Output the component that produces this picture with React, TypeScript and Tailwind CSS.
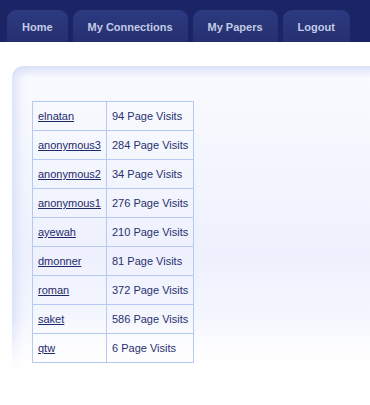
const tabs = ['Home', 'My Connections', 'My Papers', 'Logout'];

const visits: [string, number][] = [
  ['elnatan', 94],
  ['anonymous3', 284],
  ['anonymous2', 34],
  ['anonymous1', 276],
  ['ayewah', 210],
  ['dmonner', 81],
  ['roman', 372],
  ['saket', 586],
  ['qtw', 6],
];

export default function App() {
  return (
    <div className="min-h-screen bg-white font-['Liberation_Sans',Arial,sans-serif] overflow-hidden">
      {/* nav */}
      <div className="h-[42px] bg-[#1b2566] flex items-end gap-[5px] pl-[7px]">
        {tabs.map(t => (
          <a
            key={t}
            href="#"
            className="h-[32px] px-[15px] flex items-center rounded-t-[9px] bg-gradient-to-b from-[#2c3a80] to-[#25306f] text-[11px] font-bold text-[#c3cbe6] pt-[3px]"
          >
            {t}
          </a>
        ))}
      </div>

      {/* content panel, its shading fades out toward the bottom */}
      <div className="relative isolate mt-[24px] ml-[12px] h-[320px] pt-[35px] pl-[20px] before:content-[''] before:absolute before:inset-0 before:-z-10 before:rounded-tl-[11px] before:bg-[linear-gradient(to_bottom,#dce2f8_0px,#f9faff_12px,#f6f8fe_60px,#eef1fd_190px,#f6f8fe_270px,#ffffff_320px)] before:shadow-[inset_10px_0_12px_-6px_#d6ddf7] before:[mask-image:linear-gradient(to_bottom,black_250px,transparent_305px)]">
        <table className="border-collapse text-[11px] text-[#273070]">
          <tbody>
            {visits.map(([name, n]) => (
              <tr key={name}>
                <td className="border border-[#b6c9f4] h-[29px] pl-[5px] pr-[5px] leading-[14px]">
                  <a href="#" className="underline text-[#1e2a6c]">{name}</a>
                </td>
                <td className="border border-[#b6c9f4] h-[29px] pl-[5px] pr-[5px] leading-[14px]">
                  {n} Page Visits
                </td>
              </tr>
            ))}
          </tbody>
        </table>
      </div>
    </div>
  );
}
